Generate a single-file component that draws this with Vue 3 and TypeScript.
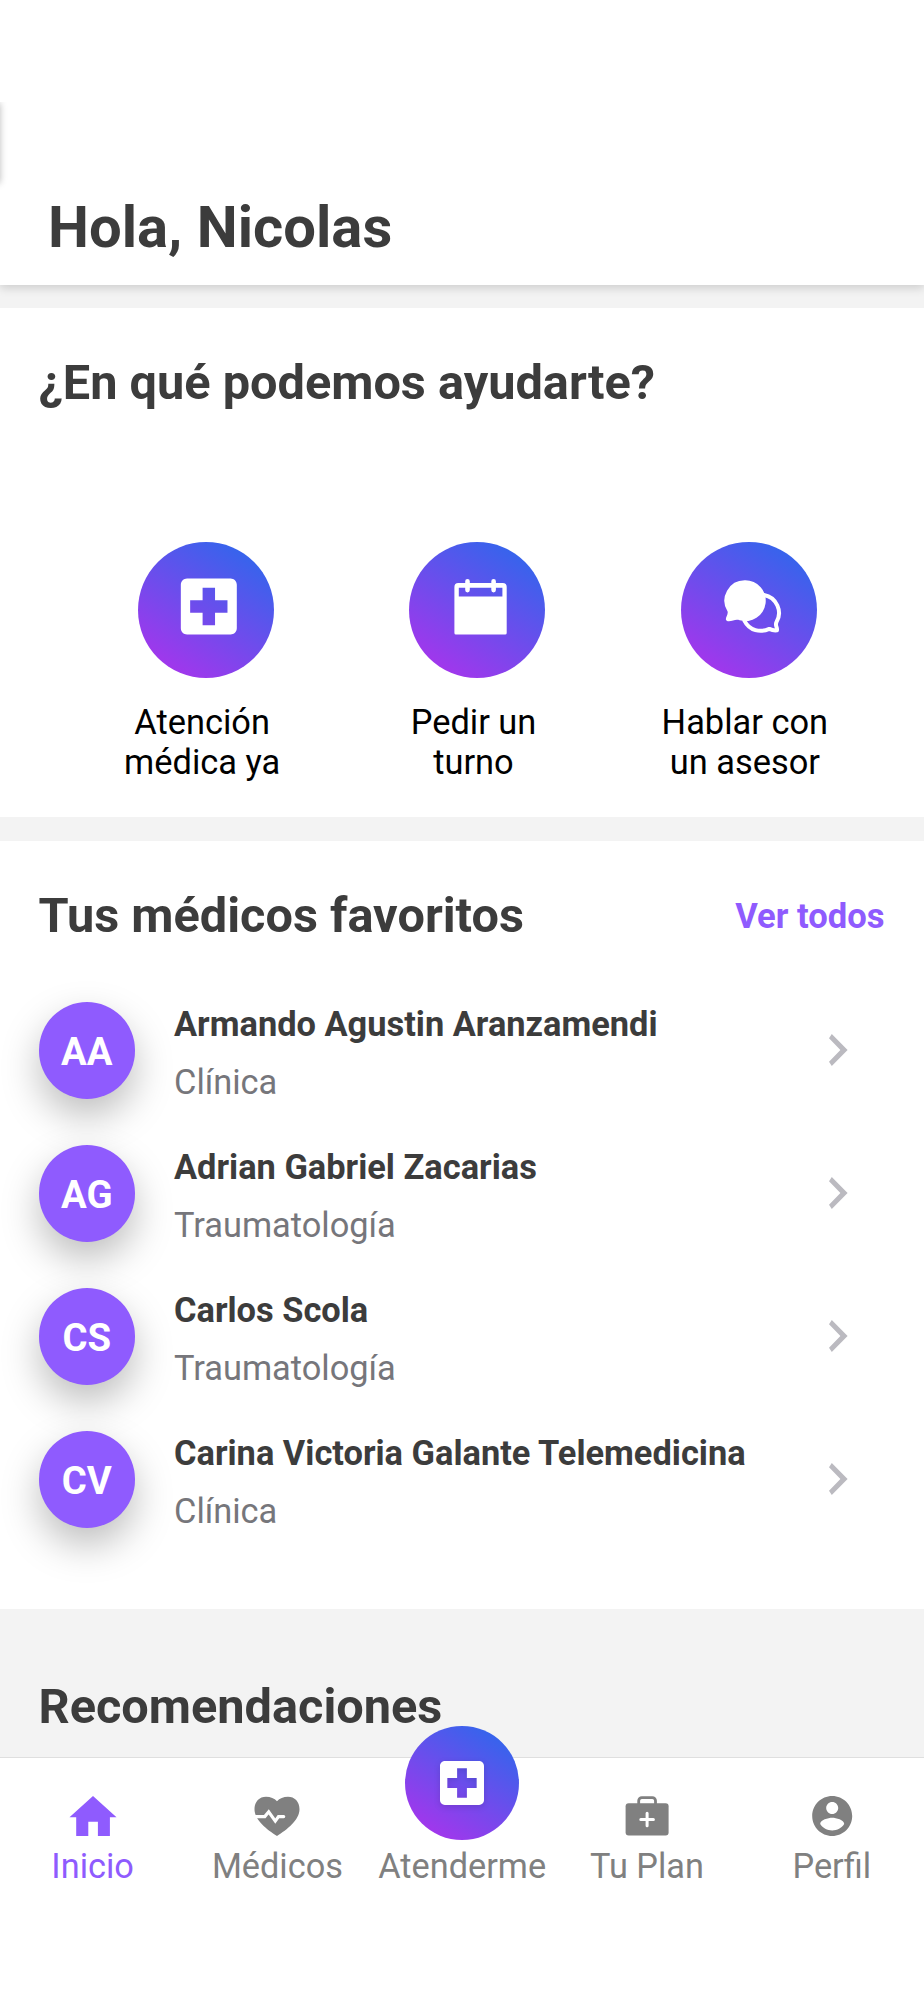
<script setup lang="ts">
interface Action {
  icon: 'hospital' | 'calendar' | 'chat'
  lines: [string, string]
}

interface Doctor {
  initials: string
  name: string
  specialty: string
}

interface Tab {
  icon: 'home' | 'heart' | 'fab' | 'bag' | 'profile'
  label: string
  active?: boolean
}

const actions: Action[] = [
  { icon: 'hospital', lines: ['Atención', 'médica ya'] },
  { icon: 'calendar', lines: ['Pedir un', 'turno'] },
  { icon: 'chat', lines: ['Hablar con', 'un asesor'] },
]

const doctors: Doctor[] = [
  { initials: 'AA', name: 'Armando Agustin Aranzamendi', specialty: 'Clínica' },
  { initials: 'AG', name: 'Adrian Gabriel Zacarias', specialty: 'Traumatología' },
  { initials: 'CS', name: 'Carlos Scola', specialty: 'Traumatología' },
  { initials: 'CV', name: 'Carina Victoria Galante Telemedicina', specialty: 'Clínica' },
]

const tabs: Tab[] = [
  { icon: 'home', label: 'Inicio', active: true },
  { icon: 'heart', label: 'Médicos' },
  { icon: 'fab', label: 'Atenderme' },
  { icon: 'bag', label: 'Tu Plan' },
  { icon: 'profile', label: 'Perfil' },
]

const hospitalPath =
  'M19 3H5c-1.1 0-2 .9-2 2v14c0 1.1.9 2 2 2h14c1.1 0 2-.9 2-2V5c0-1.1-.9-2-2-2zm-1 11h-4v4h-4v-4H6v-4h4V6h4v4h4v4z'
</script>

<template>
  <div class="screen">
    <header class="header">
      <span class="edge"></span>
      <h1 class="greeting">Hola, Nicolas</h1>
    </header>

    <section class="help">
      <h2 class="title help-title">¿En qué podemos ayudarte?</h2>
      <div class="actions">
        <button v-for="action in actions" :key="action.icon" class="action">
          <span class="disc">
            <svg v-if="action.icon === 'hospital'" class="glyph" viewBox="0 0 136 136">
              <path transform="translate(33.5 27.2) scale(3.11)" :d="hospitalPath" fill="#fff" />
            </svg>
            <svg v-else-if="action.icon === 'calendar'" class="glyph" viewBox="0 0 136 136">
              <path
                fill="#fff"
                fill-rule="evenodd"
                d="M49.3 41h44.4a4 4 0 0 1 4 4v46a1.6 1.6 0 0 1-1.6 1.6H47a1.6 1.6 0 0 1-1.6-1.6V45a4 4 0 0 1 3.9-4zM49.8 45.8v8.6h43.6v-8.6z"
              />
              <path d="M58.5 39.3v8.8M84.6 39.3v8.8" stroke="#fff" stroke-width="4.6" stroke-linecap="round" />
            </svg>
            <svg v-else class="glyph" viewBox="0 0 136 136">
              <path
                fill="#fff"
                d="M64.2 38.300a20.400 20.400 0 1 1-5.500 40c-2.400-.9-4.300-.5-6.600.2-3 .9-6.900 1.400-7.200-1-.3-2.400 2.400-5.200 1.700-7.900A20.400 20.400 0 0 1 64.200 38.300z"
              />
              <path
                fill="none"
                stroke="#fff"
                stroke-width="4"
                stroke-linejoin="round"
                stroke-linecap="round"
                d="M83 53a18.300 18.300 0 0 1 12.300 27.500c-.6 1.800-.3 3.200.2 4.400.5 1.300.7 2.500.4 3.500-2.500.4-5-.2-7.600-1.500-9 4-19.700 2-24.800-8"
              />
            </svg>
          </span>
          <span class="action-label">{{ action.lines[0] }}<br />{{ action.lines[1] }}</span>
        </button>
      </div>
    </section>

    <section class="favorites">
      <div class="favorites-head">
        <h2 class="title">Tus médicos favoritos</h2>
        <a class="see-all">Ver todos</a>
      </div>
      <ul class="doctors">
        <li v-for="doctor in doctors" :key="doctor.initials" class="doctor">
          <span class="avatar">{{ doctor.initials }}</span>
          <div class="info">
            <span class="name">{{ doctor.name }}</span>
            <span class="specialty">{{ doctor.specialty }}</span>
          </div>
          <svg class="chevron" viewBox="0 0 19 32">
            <path d="M2.800 0 18.600 16 2.800 32 0 27.800 11.400 16 0 4.200z" fill="#bbbac0" />
          </svg>
        </li>
      </ul>
    </section>

    <section class="recommendations">
      <h2 class="title">Recomendaciones</h2>
    </section>

    <nav class="tabbar">
      <a v-for="tab in tabs" :key="tab.icon" class="tab" :class="{ active: tab.active }">
        <span v-if="tab.icon === 'fab'" class="fab">
          <svg class="fab-glyph" viewBox="3 3 18 18"><path :d="hospitalPath" fill="#fff" /></svg>
        </span>
        <svg v-else-if="tab.icon === 'home'" class="icon" viewBox="0 0 48 40">
          <path d="M19.300 40V25.700h9.600V40h12V21.200H47.500L24 0 .5 21.200H7.200V40z" fill="currentColor" />
        </svg>
        <svg v-else-if="tab.icon === 'heart'" class="icon" viewBox="0 0 48 40">
          <path
            d="M24 40C14 33.500 1.500 24 1.500 13.200 1.500 5.500 6.500.7 13 .7c4.600 0 8.400 1.600 11 4.600 2.600-3 6.400-4.600 11-4.600 6.500 0 11.500 4.800 11.500 12.500C46.500 24 34 33.500 24 40z"
            fill="currentColor"
          />
          <path
            d="M1 20.600h10.800l3.900-4.800 6.600 9.300 3.200-4.500h5.200"
            fill="none"
            stroke="#fff"
            stroke-width="3.200"
            stroke-linecap="round"
          />
        </svg>
        <svg v-else-if="tab.icon === 'bag'" class="icon" viewBox="0 0 48 40">
          <rect x="2.600" y="7.200" width="43" height="32.400" rx="3" fill="currentColor" />
          <path d="M15.700 8.500V4.800a3.200 3.200 0 0 1 3.200-3.200h10.400a3.200 3.200 0 0 1 3.200 3.200v3.700" fill="none" stroke="currentColor" stroke-width="2.800" />
          <path d="M24.100 17.200v12.600M17.800 23.500h12.600" stroke="#fff" stroke-width="3" stroke-linecap="round" />
        </svg>
        <svg v-else class="icon" viewBox="0 0 48 40">
          <path
            transform="translate(.2 -4) scale(2)"
            d="M12 2C6.480 2 2 6.480 2 12s4.480 10 10 10 10-4.480 10-10S17.520 2 12 2zm0 3c1.660 0 3 1.340 3 3s-1.340 3-3 3-3-1.340-3-3 1.340-3 3-3zm0 14.200c-2.500 0-4.710-1.280-6-3.220.03-1.990 4-3.080 6-3.080 1.990 0 5.970 1.090 6 3.080-1.290 1.940-3.500 3.220-6 3.220z"
            fill="currentColor"
          />
        </svg>
        <span class="tab-label">{{ tab.label }}</span>
      </a>
    </nav>
  </div>
</template>

<style>
body {
  margin: 0;
  background: #fff;
}
</style>

<style scoped>
.screen {
  width: 924px;
  height: 2000px;
  display: flex;
  flex-direction: column;
  overflow: hidden;
  background: #f3f3f3;
  font-family: Roboto, 'Liberation Sans', sans-serif;
  color: #3c3c3c;
}

.header {
  position: relative;
  height: 285px;
  flex: none;
  box-sizing: border-box;
  padding: 197px 0 0 48px;
  background: #fff;
  box-shadow: 0 3px 9px rgba(0, 0, 0, 0.16);
}

.edge {
  position: absolute;
  left: -10px;
  top: 102px;
  width: 10px;
  height: 80px;
  box-shadow: 0 1px 7px rgba(0, 0, 0, 0.27);
  clip-path: inset(0 -8px -8px 0);
}

.greeting {
  margin: 0;
  font-size: 58px;
  line-height: 60px;
  font-weight: 700;
}

.title {
  margin: 0;
  font-size: 48.700px;
  line-height: 60px;
  font-weight: 700;
  white-space: nowrap;
}

.help {
  height: 509px;
  flex: none;
  box-sizing: border-box;
  margin-top: 23px;
  padding-top: 45px;
  background: #fff;
}

.help-title {
  padding-left: 38.500px;
}

.actions {
  display: grid;
  grid-template-columns: repeat(3, 1fr);
  margin: 128.500px 43.500px 0 66.500px;
}

.action {
  display: flex;
  flex-direction: column;
  align-items: center;
  gap: 24px;
  padding: 0;
  border: 0;
  background: none;
  font: inherit;
}

.disc {
  width: 136px;
  height: 136px;
  margin-left: 8px;
  border-radius: 50%;
  background: linear-gradient(33deg, #a336ec 12%, #3365ec 89%);
}

.glyph {
  display: block;
  width: 136px;
  height: 136px;
}

.action-label {
  font-size: 34.400px;
  line-height: 40.500px;
  color: #000;
  text-align: center;
  white-space: nowrap;
}

.favorites {
  height: 768px;
  flex: none;
  box-sizing: border-box;
  margin-top: 23.500px;
  padding-top: 45px;
  background: #fff;
}

.favorites-head {
  display: flex;
  justify-content: space-between;
  align-items: center;
  padding: 0 39.500px 0 38.500px;
}

.see-all {
  font-size: 34.600px;
  line-height: 56px;
  font-weight: 700;
  color: #8f5bfe;
}

.doctors {
  margin: 52.500px 0 0;
  padding: 0;
  list-style: none;
}

.doctor {
  display: flex;
  align-items: flex-start;
  height: 143px;
  box-sizing: border-box;
  padding: 4.300px 76.500px 0 38.500px;
  background: #fff;
}

.avatar {
  flex: none;
  width: 96.500px;
  height: 96.500px;
  border-radius: 50%;
  background: #8f5bfe;
  box-shadow: 0 17px 38px rgba(0, 0, 0, 0.26);
  color: #fff;
  font-size: 38.300px;
  font-weight: 700;
  line-height: 100px;
  text-align: center;
}

.info {
  display: flex;
  flex-direction: column;
  gap: 18.300px;
  flex: 1;
  margin: 1.300px 0 0 39px;
  font-size: 34.400px;
  line-height: 40px;
  white-space: nowrap;
}

.name {
  font-weight: 700;
}

.specialty {
  color: #76767b;
}

.chevron {
  flex: none;
  width: 19px;
  height: 32px;
  margin-top: 31.700px;
}

.recommendations {
  height: 148.500px;
  flex: none;
  box-sizing: border-box;
  padding: 68px 0 0 38.500px;
}

.tabbar {
  flex: 1;
  display: grid;
  grid-template-columns: repeat(5, 1fr);
  border-top: 1.500px solid #dfdfdf;
  background: #fff;
}

.tab {
  position: relative;
  display: flex;
  flex-direction: column;
  align-items: center;
  padding: 37.800px 0 0 .4px;
  color: #808080;
}

.tab.active {
  color: #8f5bfe;
}

.icon {
  width: 48px;
  height: 40px;
}

.fab {
  position: relative;
  display: flex;
  align-items: center;
  justify-content: center;
  width: 114.500px;
  height: 114.500px;
  margin: -70px 0 -4.500px;
  border-radius: 50%;
  background: linear-gradient(33deg, #a336ec 12%, #3365ec 89%);
}

.fab-glyph {
  width: 44px;
  height: 44px;
  overflow: visible;
  filter: drop-shadow(0 2px 3px rgba(0, 0, 0, 0.12));
}

.tab-label {
  margin-top: 10.200px;
  font-size: 34.300px;
  line-height: 40px;
  white-space: nowrap;
}
</style>
